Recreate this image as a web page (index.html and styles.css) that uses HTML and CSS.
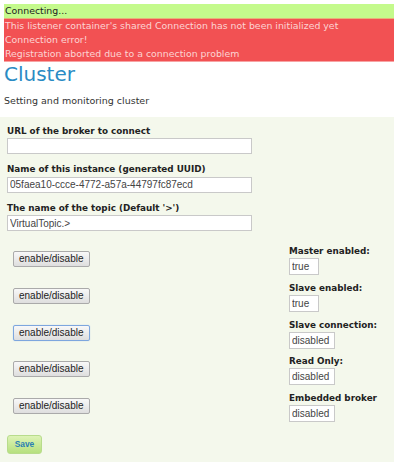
FILE: index.html
```html
<!DOCTYPE html>
<html lang="en">
<head>
    <meta charset="UTF-8">
    <meta name="viewport" content="width=device-width, initial-scale=1.0">
    <title>Cluster</title>
    <link rel="stylesheet" href="styles.css">
</head>
<body>
    <div class="messages">
        <div class="msg-info">Connecting...</div>
        <div class="msg-error">
            <div>This listener container's shared Connection has not been initialized yet</div>
            <div>Connection error!</div>
            <div>Registration aborted due to a connection problem</div>
        </div>
    </div>

    <h1 class="page-title">Cluster</h1>
    <p class="page-desc">Setting and monitoring cluster</p>

    <form class="panel">
        <div class="field">
            <label for="brokerUrl">URL of the broker to connect</label>
            <input type="text" id="brokerUrl" class="wide">
        </div>
        <div class="field">
            <label for="instanceName">Name of this instance (generated UUID)</label>
            <input type="text" id="instanceName" class="wide" value="05faea10-ccce-4772-a57a-44797fc87ecd">
        </div>
        <div class="field">
            <label for="topicName">The name of the topic (Default '&gt;')</label>
            <input type="text" id="topicName" class="wide" value="VirtualTopic.&gt;">
        </div>

        <div class="toggles">
            <div class="toggle-row">
                <div class="toggle-action"><button type="button">enable/disable</button></div>
                <div class="toggle-state">
                    <label>Master enabled:</label>
                    <input type="text" class="short" value="true" readonly>
                </div>
            </div>
            <div class="toggle-row">
                <div class="toggle-action"><button type="button">enable/disable</button></div>
                <div class="toggle-state">
                    <label>Slave enabled:</label>
                    <input type="text" class="short" value="true" readonly>
                </div>
            </div>
            <div class="toggle-row">
                <div class="toggle-action"><button type="button" class="focused">enable/disable</button></div>
                <div class="toggle-state">
                    <label>Slave connection:</label>
                    <input type="text" class="medium" value="disabled" readonly>
                </div>
            </div>
            <div class="toggle-row">
                <div class="toggle-action"><button type="button">enable/disable</button></div>
                <div class="toggle-state">
                    <label>Read Only:</label>
                    <input type="text" class="medium" value="disabled" readonly>
                </div>
            </div>
            <div class="toggle-row">
                <div class="toggle-action"><button type="button">enable/disable</button></div>
                <div class="toggle-state">
                    <label>Embedded broker</label>
                    <input type="text" class="medium" value="disabled" readonly>
                </div>
            </div>
        </div>

        <button type="button" class="save">Save</button>
    </form>
</body>
</html>
```

FILE: styles.css
```css
body {
    margin: 0;
    font-family: "DejaVu Sans", sans-serif;
    color: #333;
    background: #fff;
}
.messages {
    margin-left: 4px;
    padding-top: 4px;
    font-size: 9.4px;
    line-height: 14px;
}
.msg-info {
    background: #c4fa8c;
    color: #222;
    padding-left: 1px;
    border-bottom: 1px solid #e6b27a;
}
.msg-error {
    background: #f25153;
    color: #fcd4d4;
    padding-left: 1px;
    border-bottom: 1px solid #f7a3a3;
}
.page-title {
    margin: 1px 0 0 4px;
    font-size: 20px;
    font-weight: normal;
    line-height: 23px;
    color: #2a8bc4;
}
.page-desc {
    margin: 9px 0 0 4px;
    font-size: 9.5px;
    line-height: 12px;
    color: #333;
}
.panel {
    margin-top: 10px;
    padding: 8.5px 7px 8px;
    background: #f4f8ec;
    min-height: 330px;
    font-size: 10px;
}
label {
    display: block;
    font-size: 8.8px;
    font-weight: bold;
    line-height: 11px;
    color: #222;
}
input {
    display: block;
    font-family: "Liberation Sans", Arial, sans-serif;
    font-size: 10px;
    color: #444;
    height: 16px;
    box-sizing: border-box;
    padding: 0 2px;
    border: 1px solid #c9c9c9;
    background: #fff;
    outline: none;
}
.field {
    margin-bottom: 10.2px;
}
.field label {
    margin-bottom: 1.5px;
}
.wide {
    width: 245px;
}
.short {
    width: 30px;
}
.medium {
    width: 46px;
}
.toggles {
    margin-top: 15px;
}
.toggle-row {
    display: flex;
    height: 36.7px;
}
.toggle-action {
    box-sizing: border-box;
    width: 282px;
    padding: 5px 0 0 6px;
}
.toggle-state label {
    margin-bottom: 1px;
}
.toggle-state input {
    height: 17px;
}
button {
    display: block;
    font-family: "Liberation Sans", Arial, sans-serif;
    font-size: 10px;
    color: #222;
    height: 16px;
    padding: 0 5px;
    border: 1px solid #aaa;
    border-radius: 2px;
    background: linear-gradient(#f8f8f8, #dedede);
    line-height: 14px;
}
button.focused {
    border-color: #7da6de;
    box-shadow: 0 0 1px #9dbcec;
}
.save {
    margin-top: 4.7px;
    height: 19px;
    width: 35px;
    padding: 0;
    font-size: 8.4px;
    font-weight: bold;
    color: #2a7fb4;
    border: 1px solid #b8dc8c;
    border-radius: 3px;
    background: linear-gradient(#ddf3b6, #b6e07e);
}
```
